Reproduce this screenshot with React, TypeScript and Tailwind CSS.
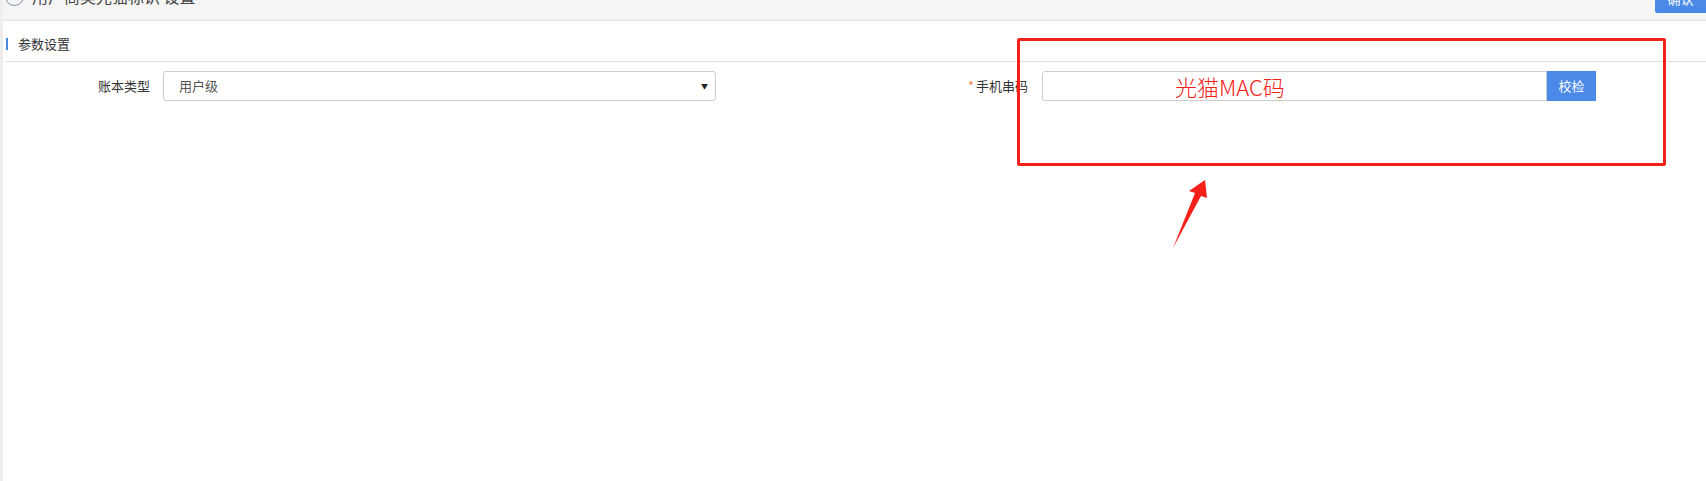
import React from "react";

const font = { fontFamily: '"Microsoft YaHei", "Noto Sans CJK SC", "Noto Sans", sans-serif' };

export default function App() {
  return (
    <div className="relative flex h-[481px] w-full bg-white text-[13px] text-[#333]" style={font}>
      {/* left gutter */}
      <div className="w-[3px] shrink-0 bg-[#eeeeee]" />

      <main className="flex-1 min-w-0">
        {/* top bar (scrolled, only bottom edge visible) */}
        <header className="flex h-[21px] items-start justify-between overflow-hidden border-b border-[#e4e4e4] bg-[#f5f5f5]">
          <div className="-mt-[14px] flex items-center gap-[8px] pl-[2px]">
            <span className="h-[19px] w-[19px] rounded-full border border-[#7f90aa]" />
            <span className="text-[16px] leading-[20px] text-[#444]">用户商类光猫标识 设置</span>
          </div>
          <button className="-mt-[15px] h-[28px] w-[51px] rounded-bl-[2px] bg-[#4a89e8] text-[13px] text-white">
            确认
          </button>
        </header>

        {/* section title */}
        <div className="ml-[3px] flex h-[41px] items-center gap-[10px] border-b border-[#dddddd] pt-[5px]">
          <span className="h-[12px] w-[2px] bg-[#4a89e8]" />
          <span className="text-[13px] text-[#333]">参数设置</span>
        </div>

        {/* form row */}
        <div className="mt-[9px] flex items-center">
          <label className="w-[147px] text-right text-[#333]">账本类型</label>
          <div className="ml-[13px] flex h-[30px] w-[553px] items-center justify-between rounded-[3px] border border-[#cccccc] pl-[15px] pr-[7px]">
            <span className="text-[#555]">用户级</span>
            <span className="text-[7px] text-[#222]">▼</span>
          </div>

          <label className="w-[312px] text-right text-[#333]">
            <span className="mr-[2px] text-[#f08a5d]">*</span>手机串码
          </label>
          <div className="relative ml-[14px] flex h-[30px]">
            <div className="h-[30px] w-[505px] rounded-l-[3px] border border-[#cccccc]" />
            <button className="h-[30px] w-[49px] bg-[#4a89e8] text-[13px] text-white">校检</button>
            {/* annotation text */}
            <span className="absolute left-[133px] top-1/2 -translate-y-1/2 text-[22px] font-light leading-none text-[#f5201a]">
              光猫MAC码
            </span>
          </div>
        </div>
      </main>

      {/* annotation frame */}
      <div className="pointer-events-none absolute left-[1017px] top-[38px] h-[128px] w-[649px] rounded-[2px] border-[3px] border-[#f5201a]" />

      {/* annotation arrow */}
      <svg className="pointer-events-none absolute left-0 top-0" width="1706" height="481">
        <polygon
          points="1205,180 1189,191 1195,193 1173,248 1201,196 1207,198"
          fill="#f5201a"
        />
      </svg>
    </div>
  );
}
